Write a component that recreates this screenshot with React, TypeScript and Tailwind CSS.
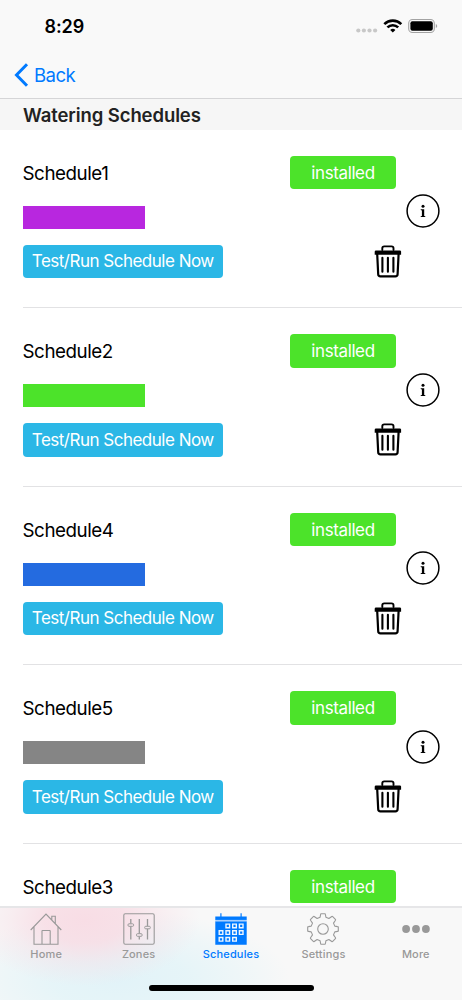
import type { ReactNode } from 'react';
import clsx from 'clsx';

type Schedule = {
  name: string;
  color?: string;
};

const schedules: Schedule[] = [
  { name: 'Schedule1', color: 'bg-[#b827df]' },
  { name: 'Schedule2', color: 'bg-[#4ce32a]' },
  { name: 'Schedule4', color: 'bg-[#246be0]' },
  { name: 'Schedule5', color: 'bg-[#858585]' },
  { name: 'Schedule3' },
];

const StatusBar = () => (
  <div className="flex h-[51px] items-center justify-between pr-[24px] pl-[44.5px]">
    <span className="pt-[2px] text-[18px] leading-none font-semibold tracking-[-0.1px] text-black">
      8:29
    </span>
    <svg width="82" height="16" viewBox="0 0 82 16">
      <g fill="#c8c8c8">
        <circle cx="2.3" cy="12.5" r="2.1" />
        <circle cx="7.9" cy="12.5" r="2.1" />
        <circle cx="13.5" cy="12.5" r="2.1" />
        <circle cx="19.1" cy="12.5" r="2.1" />
      </g>
      <g fill="none" stroke="#000" strokeWidth="2.6">
        <path d="M28.3 6.1a12.2 12.2 0 0 1 17 0" />
        <path d="M31.4 9.4a7.8 7.8 0 0 1 10.8 0" />
      </g>
      <path d="M36.8 14.6l-2.6-2.7a3.9 3.9 0 0 1 5.2 0z" fill="#000" />
      <rect x="52.7" y="1.5" width="25.6" height="13" rx="3.8" fill="none" stroke="#a3a3a3" strokeWidth="1.1" />
      <rect x="54.4" y="3.3" width="22.4" height="9.4" rx="2" fill="#000" />
      <path d="M79.8 5.9c1.9.7 1.9 3.500 0 4.200z" fill="#a3a3a3" />
    </svg>
  </div>
);

const NavBar = () => (
  <div className="flex h-[47px] items-center gap-[5px] pl-[14px] text-[#007aff]">
    <svg width="15" height="24" viewBox="0 0 15 24" fill="none" stroke="currentColor" strokeWidth="3">
      <path d="M13 1.3L2.5 12 13 22.7" />
    </svg>
    <span className="pt-px text-[18.6px] leading-none tracking-[-0.6px]">Back</span>
  </div>
);

const TrashIcon = () => (
  <svg width="28" height="33" viewBox="0 0 28 33" fill="none" stroke="#000" strokeLinecap="round" strokeLinejoin="round">
    <path d="M8.3 5V3.3Q8.3 1.4 10.3 1.4h7.2q2 0 2 1.9V5" strokeWidth="1.9" />
    <path d="M.7 6.8q0-1.3 1.3-1.3h23.8q1.3 0 1.3 1.3v3H.7z" fill="#000" stroke="none" />
    <path d="M3.2 9l1 20.2q.1 2.1 2.2 2.1h15q2.1 0 2.2-2.1l1-20.2" strokeWidth="2.2" />
    <path d="M8.4 12.8v14M13.9 12.8v14M19.4 12.8v14" strokeWidth="2.1" />
  </svg>
);

const InfoIcon = () => (
  <svg width="34" height="34" viewBox="0 0 34 34">
    <circle cx="17" cy="17" r="15.9" fill="none" stroke="#000" strokeWidth="1.5" />
    <circle cx="17" cy="12.3" r="1.5" />
    <path d="M14.7 15.2h3.5v6.7l1.1.4v.8h-4.6v-.8l1.2-.4v-5.5l-1.2-.4z" />
  </svg>
);

const ScheduleRow = ({ name, color }: Schedule) => (
  <li className="ml-[22.5px] flex h-[178.5px] shrink-0 border-b border-[#e2e2e4]">
    <div className="flex w-[267.5px] flex-col items-start">
      <h3 className="mt-[26px] h-[33px] text-[18.8px] leading-[35px] tracking-[-0.45px] text-black">
        {name}
      </h3>
      {color && (
        <>
          <div className={clsx('mt-[17px] h-[23px] w-[122.5px]', color)} />
          <button className="mt-[16px] h-[33.5px] w-[200.5px] rounded-[4px] bg-[#2bb7e6] pt-px text-[17px] leading-none tracking-[-0.5px] whitespace-nowrap text-white">
            Test/Run Schedule Now
          </button>
        </>
      )}
    </div>
    <div className="flex w-[116px] flex-col">
      <span className="mt-[26px] h-[33.5px] w-[106px] rounded-[4px] bg-[#4ce32a] text-center text-[17px] leading-[34px] tracking-[-0.4px] text-white">
        installed
      </span>
      {color && (
        <button className="mt-[55.5px] ml-[84px] self-start">
          <TrashIcon />
        </button>
      )}
    </div>
    {color && (
      <button className="mt-[64.5px] self-start">
        <InfoIcon />
      </button>
    )}
  </li>
);

const HomeIcon = () => (
  <svg width="32" height="32" viewBox="0 0 32 32" fill="none" stroke="currentColor" strokeWidth="1.1">
    <path d="M.7 17L16 1l15.3 16M4 14v17.3h24V14M21.8 6.8V3.2h3.5V10.5M12 31.3V18q0-.5.5-.5h7.2q.5 0 .5.5v13.3" />
  </svg>
);

const ZonesIcon = () => (
  <svg width="32" height="32" viewBox="0 0 32 32" fill="none" stroke="currentColor">
    <rect x=".8" y=".8" width="30.4" height="30.4" rx="1.5" strokeWidth="1.1" />
    <path d="M7.8 6v4.5M7.8 13.5v13M16.3 6v14.5M16.3 23.7v2.8M24.5 6v7M24.5 16v10.5" strokeWidth="1.3" />
    <rect x="5" y="10.8" width="5.6" height="2.5" rx="1" />
    <rect x="13.5" y="20.7" width="5.6" height="2.6" rx="1" />
    <rect x="21.7" y="13.3" width="5.6" height="2.5" rx="1" />
  </svg>
);

const SchedulesIcon = () => (
  <svg width="32" height="32" viewBox="0 0 32 32">
    <path d="M.3 3.5h5V.3h1.2v3.2h19V.3h1.2v3.2h5v3.4H.3zM.3 8.3h31.4v23.4H.3z" fill="currentColor" />
    <path d="M.3 6.900h31.4v1.400H.3z" fill="#a9d0ff" />
    <g fill="none" stroke="#eef6ff" strokeWidth="1.4">
      <path d="M11 11.1h3.6v3.6H11zM17.7 11.1h3.6v3.6h-3.6zM24.4 11.1H28v3.6h-3.6z" />
      <path d="M4.2 17.8h3.6v3.6H4.2zM11 17.8h3.6v3.6H11zM17.7 17.8h3.6v3.6h-3.6zM24.4 17.8H28v3.6h-3.6z" />
      <path d="M4.2 24.5h3.6v3.6H4.2zM11 24.5h3.6v3.6H11zM17.7 24.5h3.6v3.6h-3.6z" />
    </g>
  </svg>
);

const SettingsIcon = () => (
  <svg width="32" height="32" viewBox="0 0 32 32" fill="none" stroke="currentColor" strokeWidth="1.1" strokeLinejoin="round">
    <path d="M14 .7h4q.3 0 .4.8l.5 2.7 3 1.3 2.9-2q.5-.3.9.1l2.7 2.7q.4.4.1.9l-2 2.9 1.3 3 2.7.5q.8.1.8.4v4q0 .3-.8.4l-2.700.5-1.300 3 2 2.900q.3.5-.1.900l-2.700 2.700q-.4.4-.9.1l-2.900-2-3 1.300-.5 2.700q-.1.8-.4.8h-4q-.3 0-.4-.8l-.5-2.700-3-1.300-2.900 2q-.5.3-.9-.1l-2.700-2.700q-.4-.4-.1-.9l2-2.900-1.300-3-2.700-.5q-.8-.1-.8-.4v-4q0-.3.8-.4l2.700-.5 1.300-3-2-2.900q-.3-.5.1-.9l2.700-2.700q.4-.4.9-.1l2.900 2 3-1.300.5-2.700q.1-.8.4-.8z" />
    <circle cx="16" cy="16" r="5.3" />
  </svg>
);

const MoreIcon = () => (
  <svg width="32" height="32" viewBox="0 0 32 32" fill="currentColor">
    <circle cx="6.1" cy="16" r="3.9" />
    <circle cx="16" cy="16" r="3.9" />
    <circle cx="25.9" cy="16" r="3.9" />
  </svg>
);

const Tab = ({ label, active, children }: { label: string; active?: boolean; children: ReactNode }) => (
  <button
    className={clsx(
      'flex flex-1 flex-col items-center gap-[2px] pt-[5px]',
      active ? 'text-[#007aff]' : 'text-[#999]',
    )}
  >
    {children}
    <span className="text-[11px] leading-[15px] font-medium tracking-[0.15px]">{label}</span>
  </button>
);

const TabBar = () => (
  <nav className="h-[94px] shrink-0 overflow-hidden border-t-2 border-[#e6e6e8] bg-[#f8f8f8] bg-[radial-gradient(ellipse_115px_66px_at_85px_12px,#f8dde5_0%,#f8dde5dd_35%,#f8dde566_65%,#f8dde500_100%),radial-gradient(ellipse_170px_70px_at_120px_72px,#e2f3f8_0%,#e3f4f8dd_40%,#e3f4f877_70%,#e3f4f800_100%)]">
    <div className="flex">
      <Tab label="Home">
        <HomeIcon />
      </Tab>
      <Tab label="Zones">
        <ZonesIcon />
      </Tab>
      <Tab label="Schedules" active>
        <SchedulesIcon />
      </Tab>
      <Tab label="Settings">
        <SettingsIcon />
      </Tab>
      <Tab label="More">
        <MoreIcon />
      </Tab>
    </div>
    <div className="mx-auto mt-[23px] h-[5.5px] w-[165px] rounded-full bg-black" />
  </nav>
);

const App = () => (
  <div className="flex h-[1000px] w-[462px] flex-col overflow-hidden bg-white font-['Inter',sans-serif]">
    <header className="h-[99px] shrink-0 border-b border-[#d5d5d7] bg-[#f9f9f9]">
      <StatusBar />
      <NavBar />
    </header>
    <main className="flex min-h-0 flex-1 flex-col overflow-hidden">
      <h2 className="h-[30.5px] shrink-0 bg-[#f6f6f6] pl-[23px] text-[18.5px] leading-[32px] font-semibold tracking-[-0.1px] text-[#222]">
        Watering Schedules
      </h2>
      <ul className="flex flex-col">
        {schedules.map((schedule) => (
          <ScheduleRow key={schedule.name} {...schedule} />
        ))}
      </ul>
    </main>
    <TabBar />
  </div>
);

export default App;
